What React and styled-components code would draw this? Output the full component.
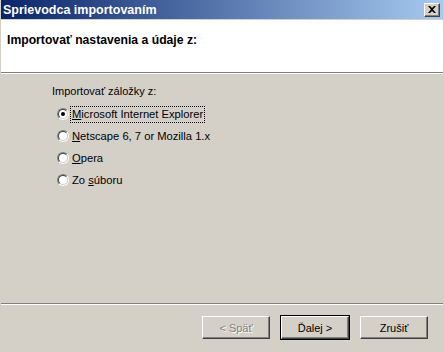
import React from 'react';
import styled, { createGlobalStyle } from 'styled-components';

const GlobalStyle = createGlobalStyle`
  html, body {
    margin: 0;
    padding: 0;
    background: #d4d0c8;
  }
  body {
    font-family: "Liberation Sans", Arial, sans-serif;
    font-size: 11px;
    color: #000;
  }
`;

const Window = styled.div`
  width: 444px;
  height: 352px;
  box-sizing: border-box;
  display: flex;
  flex-direction: column;
  background: #d4d0c8;
  border-left: 1px solid #d4d0c8;
  border-right: 1px solid #d4d0c8;
`;

const TitleBar = styled.div`
  height: 19px;
  flex: none;
  display: flex;
  align-items: center;
  justify-content: space-between;
  padding: 0 3px 0 2px;
  background: linear-gradient(to right, #0a246a, #a6caf0);
  color: #fff;
  font-weight: bold;
  font-size: 12.5px;
`;

const CloseButton = styled.div`
  width: 16px;
  height: 14px;
  box-sizing: border-box;
  display: flex;
  align-items: center;
  justify-content: center;
  background: #d4d0c8;
  border-top: 1px solid #fff;
  border-left: 1px solid #fff;
  border-right: 1px solid #404040;
  border-bottom: 1px solid #404040;
  box-shadow: inset -1px -1px 0 #808080;
`;

const Header = styled.div`
  height: 53px;
  flex: none;
  box-sizing: border-box;
  background: #fff;
  padding: 13px 0 0 6px;
  font-weight: bold;
  font-size: 12.2px;
  border-bottom: 1px solid #808080;
  box-shadow: 0 1px 0 #fff;
  margin-top: 1px;
`;

const Body = styled.div`
  flex: 1;
  padding: 11px 0 0 51px;
`;

const GroupLabel = styled.div`
  height: 14px;
  line-height: 14px;
  margin-bottom: 8px;
`;

const Options = styled.div`
  display: flex;
  flex-direction: column;
  gap: 6px;
`;

const Option = styled.label`
  display: flex;
  align-items: center;
  gap: 2px;
  height: 16px;
  padding-left: 5px;
`;

const RadioOuter = styled.span`
  width: 10px;
  height: 10px;
  flex: none;
  border-radius: 50%;
  border: 1px solid;
  border-color: #808080 #fff #fff #808080;
  display: flex;
  box-sizing: content-box;
`;

const RadioInner = styled.span`
  flex: 1;
  border-radius: 50%;
  border: 1px solid;
  border-color: #404040 #d4d0c8 #d4d0c8 #404040;
  background: #fff;
  display: flex;
  align-items: center;
  justify-content: center;
`;

const Dot = styled.span`
  width: 4px;
  height: 4px;
  border-radius: 50%;
  background: #000;
`;

const OptionText = styled.span`
  padding: 1px 1px;
  outline: ${(p) => (p.$focused ? '1px dotted #000' : 'none')};
  line-height: 13px;
  font-size: 11.2px;
`;

const Key = styled.span`
  text-decoration: underline;
`;

const Footer = styled.div`
  flex: none;
  height: 49px;
  box-sizing: border-box;
  border-top: 1px solid #808080;
  box-shadow: inset 0 1px 0 #fff;
  display: flex;
  justify-content: flex-end;
  gap: 11px;
  padding: 12px 15px 0 0;
`;

const Button = styled.div`
  width: 68px;
  height: 23px;
  box-sizing: border-box;
  display: flex;
  align-items: center;
  justify-content: center;
  background: #d4d0c8;
  border-top: 1px solid #fff;
  border-left: 1px solid #fff;
  border-right: 1px solid #404040;
  border-bottom: 1px solid #404040;
  box-shadow: inset -1px -1px 0 #808080;
  color: ${(p) => (p.$disabled ? '#808080' : '#000')};
  text-shadow: ${(p) => (p.$disabled ? '1px 1px 0 #fff' : 'none')};
  outline: ${(p) => (p.$default ? '1px solid #000' : 'none')};
`;

const Radio = ({ checked }) => (
  <RadioOuter>
    <RadioInner>{checked && <Dot />}</RadioInner>
  </RadioOuter>
);

const options = [
  { key: 'M', rest: 'icrosoft Internet Explorer', checked: true },
  { key: 'N', rest: 'etscape 6, 7 or Mozilla 1.x' },
  { key: 'O', rest: 'pera' },
];

export default function App() {
  return (
    <>
      <GlobalStyle />
      <Window>
        <TitleBar>
          <span>Sprievodca importovaním</span>
          <CloseButton>
            <svg width="8" height="7" viewBox="0 0 8 7">
              <path d="M0 0h2l2 2 2-2h2L5 3.5 8 7H6L4 5 2 7H0l3-3.5z" fill="#000" />
            </svg>
          </CloseButton>
        </TitleBar>
        <Header>Importovať nastavenia a údaje z:</Header>
        <Body>
          <GroupLabel>Importovať záložky z:</GroupLabel>
          <Options>
            {options.map((o) => (
              <Option key={o.key}>
                <Radio checked={o.checked} />
                <OptionText $focused={o.checked}>
                  <Key>{o.key}</Key>
                  {o.rest}
                </OptionText>
              </Option>
            ))}
            <Option>
              <Radio />
              <OptionText>
                Zo <Key>s</Key>úboru
              </OptionText>
            </Option>
          </Options>
        </Body>
        <Footer>
          <Button $disabled>&lt; Späť</Button>
          <Button $default>Ďalej &gt;</Button>
          <Button>Zrušiť</Button>
        </Footer>
      </Window>
    </>
  );
}
